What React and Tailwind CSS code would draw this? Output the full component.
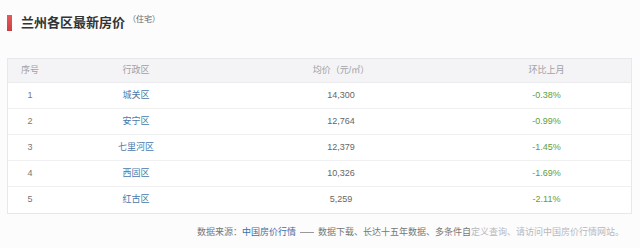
import React from 'react';

const rows = [
  { no: 1, area: '城关区', price: '14,300', change: '-0.38%' },
  { no: 2, area: '安宁区', price: '12,764', change: '-0.99%' },
  { no: 3, area: '七里河区', price: '12,379', change: '-1.45%' },
  { no: 4, area: '西固区', price: '10,326', change: '-1.69%' },
  { no: 5, area: '红古区', price: '5,259', change: '-2.11%' },
];

const font = { fontFamily: '"Liberation Sans", "Noto Sans CJK SC", sans-serif' };

const App = () => {
  return (
    <div className="w-[640px] h-[248px] bg-[#fcfcfd] overflow-hidden" style={font}>
      {/* Title */}
      <div className="flex items-center pt-[15px] pl-[7px]">
        <div className="w-[5px] h-[16px] bg-gradient-to-b from-[#e35a5e] to-[#cf3d43]" />
        <h2 className="ml-[9px] text-[13px] leading-[16px] font-bold text-[#333]">兰州各区最新房价</h2>
        <span className="ml-[3px] self-start text-[8px] leading-[10px] text-[#666]">（住宅）</span>
      </div>

      {/* Table */}
      <div className="mt-[27px] ml-[7px] w-[625px] border border-[#e8e8ec] bg-white text-[9px]">
        <div className="grid grid-cols-[44px_168px_242px_1fr] h-[24px] items-center bg-[#f4f4f6] text-[#a0a0a6] border-b border-[#ececf0]">
          <div className="text-center">序号</div>
          <div className="text-center">行政区</div>
          <div className="text-center">均价（元/㎡）</div>
          <div className="text-center">环比上月</div>
        </div>
        {rows.map((r, i) => (
          <div
            key={r.no}
            className={`grid grid-cols-[44px_168px_242px_1fr] h-[26px] items-center ${i < rows.length - 1 ? 'border-b border-[#f0f0f2]' : ''}`}
          >
            <div className="text-center text-[#777]">{r.no}</div>
            <div className="text-center text-[#4a78ad]">{r.area}</div>
            <div className="text-center text-[#666]">{r.price}</div>
            <div className="text-center text-[#5e9e3c]">{r.change}</div>
          </div>
        ))}
      </div>

      {/* Source */}
      <div className="mt-[11px] pr-[16px] flex justify-end items-center text-[9px] leading-[14px] whitespace-nowrap">
        <span className="text-[#777]">数据来源：</span>
        <span className="text-[#3a6ea8]">中国房价行情</span>
        <span className="mx-[4px] inline-block w-[14px] h-px bg-[#999]" />
        <span className="text-[#777]">数据下载、长达十五年数据、多条件自</span>
        <span className="text-[#b8b8bc]">定义查询、请访问中国房价行情网站。</span>
      </div>
    </div>
  );
};

export default App;
